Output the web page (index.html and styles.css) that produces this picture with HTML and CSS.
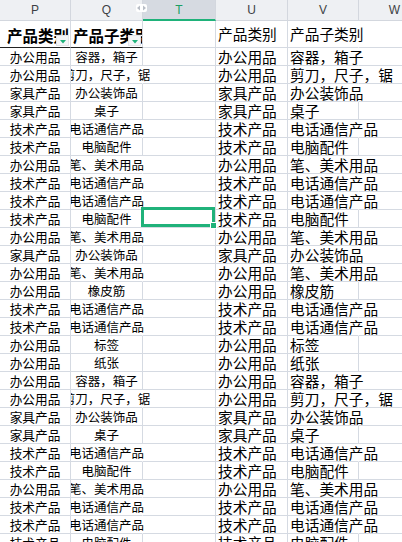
FILE: index.html
```html
<!DOCTYPE html>
<html lang="zh">
<head>
<meta charset="utf-8">
<title>Sheet</title>
<link rel="stylesheet" href="styles.css">
</head>
<body>
<div class="sheet">
  <div class="row colhead">
    <div class="ch">P</div>
    <div class="ch">Q</div>
    <div class="ch sel">T</div>
    <div class="ch">U</div>
    <div class="ch">V</div>
    <div class="ch">W</div>
  </div>
  <div class="row titles">
    <div class="cell p hd"><span class="hdtext">产品类别</span><span class="filter"><svg width="6" height="4" viewBox="0 0 6 4"><path d="M0 0H6L3 3.5Z" fill="#1fb27a"/></svg></span></div>
    <div class="cell q hd"><span class="hdtext">产品子类别</span><span class="filter"><svg width="6" height="4" viewBox="0 0 6 4"><path d="M0 0H6L3 3.5Z" fill="#1fb27a"/></svg></span></div>
    <div class="cell t"></div>
    <div class="cell u">产品类别</div>
    <div class="cell v ov">产品子类别</div>
    <div class="cell w"></div>
  </div>

  <div class="row"><div class="cell p">办公用品</div><div class="cell q">容器，箱子</div><div class="cell t"></div><div class="cell u">办公用品</div><div class="cell v ov">容器，箱子</div><div class="cell w"></div></div>
  <div class="row"><div class="cell p">办公用品</div><div class="cell q ov">剪刀，尺子，锯</div><div class="cell t"></div><div class="cell u">办公用品</div><div class="cell v ov">剪刀，尺子，锯</div><div class="cell w"></div></div>
  <div class="row"><div class="cell p">家具产品</div><div class="cell q">办公装饰品</div><div class="cell t"></div><div class="cell u">家具产品</div><div class="cell v ov">办公装饰品</div><div class="cell w"></div></div>
  <div class="row"><div class="cell p">家具产品</div><div class="cell q">桌子</div><div class="cell t"></div><div class="cell u">家具产品</div><div class="cell v">桌子</div><div class="cell w"></div></div>
  <div class="row"><div class="cell p">技术产品</div><div class="cell q ov">电话通信产品</div><div class="cell t"></div><div class="cell u">技术产品</div><div class="cell v ov">电话通信产品</div><div class="cell w"></div></div>
  <div class="row"><div class="cell p">技术产品</div><div class="cell q">电脑配件</div><div class="cell t"></div><div class="cell u">技术产品</div><div class="cell v">电脑配件</div><div class="cell w"></div></div>
  <div class="row"><div class="cell p">办公用品</div><div class="cell q ov">笔、美术用品</div><div class="cell t"></div><div class="cell u">办公用品</div><div class="cell v ov">笔、美术用品</div><div class="cell w"></div></div>
  <div class="row"><div class="cell p">技术产品</div><div class="cell q ov">电话通信产品</div><div class="cell t"></div><div class="cell u">技术产品</div><div class="cell v ov">电话通信产品</div><div class="cell w"></div></div>
  <div class="row"><div class="cell p">技术产品</div><div class="cell q ov">电话通信产品</div><div class="cell t"></div><div class="cell u">技术产品</div><div class="cell v ov">电话通信产品</div><div class="cell w"></div></div>
  <div class="row"><div class="cell p">技术产品</div><div class="cell q">电脑配件</div><div class="cell t active"></div><div class="cell u">技术产品</div><div class="cell v">电脑配件</div><div class="cell w"></div></div>
  <div class="row"><div class="cell p">办公用品</div><div class="cell q ov">笔、美术用品</div><div class="cell t"></div><div class="cell u">办公用品</div><div class="cell v ov">笔、美术用品</div><div class="cell w"></div></div>
  <div class="row"><div class="cell p">家具产品</div><div class="cell q">办公装饰品</div><div class="cell t"></div><div class="cell u">家具产品</div><div class="cell v ov">办公装饰品</div><div class="cell w"></div></div>
  <div class="row"><div class="cell p">办公用品</div><div class="cell q ov">笔、美术用品</div><div class="cell t"></div><div class="cell u">办公用品</div><div class="cell v ov">笔、美术用品</div><div class="cell w"></div></div>
  <div class="row"><div class="cell p">办公用品</div><div class="cell q">橡皮筋</div><div class="cell t"></div><div class="cell u">办公用品</div><div class="cell v">橡皮筋</div><div class="cell w"></div></div>
  <div class="row"><div class="cell p">技术产品</div><div class="cell q ov">电话通信产品</div><div class="cell t"></div><div class="cell u">技术产品</div><div class="cell v ov">电话通信产品</div><div class="cell w"></div></div>
  <div class="row"><div class="cell p">技术产品</div><div class="cell q ov">电话通信产品</div><div class="cell t"></div><div class="cell u">技术产品</div><div class="cell v ov">电话通信产品</div><div class="cell w"></div></div>
  <div class="row"><div class="cell p">办公用品</div><div class="cell q">标签</div><div class="cell t"></div><div class="cell u">办公用品</div><div class="cell v">标签</div><div class="cell w"></div></div>
  <div class="row"><div class="cell p">办公用品</div><div class="cell q">纸张</div><div class="cell t"></div><div class="cell u">办公用品</div><div class="cell v">纸张</div><div class="cell w"></div></div>
  <div class="row"><div class="cell p">办公用品</div><div class="cell q">容器，箱子</div><div class="cell t"></div><div class="cell u">办公用品</div><div class="cell v ov">容器，箱子</div><div class="cell w"></div></div>
  <div class="row"><div class="cell p">办公用品</div><div class="cell q ov">剪刀，尺子，锯</div><div class="cell t"></div><div class="cell u">办公用品</div><div class="cell v ov">剪刀，尺子，锯</div><div class="cell w"></div></div>
  <div class="row"><div class="cell p">家具产品</div><div class="cell q">办公装饰品</div><div class="cell t"></div><div class="cell u">家具产品</div><div class="cell v ov">办公装饰品</div><div class="cell w"></div></div>
  <div class="row"><div class="cell p">家具产品</div><div class="cell q">桌子</div><div class="cell t"></div><div class="cell u">家具产品</div><div class="cell v">桌子</div><div class="cell w"></div></div>
  <div class="row"><div class="cell p">技术产品</div><div class="cell q ov">电话通信产品</div><div class="cell t"></div><div class="cell u">技术产品</div><div class="cell v ov">电话通信产品</div><div class="cell w"></div></div>
  <div class="row"><div class="cell p">技术产品</div><div class="cell q">电脑配件</div><div class="cell t"></div><div class="cell u">技术产品</div><div class="cell v">电脑配件</div><div class="cell w"></div></div>
  <div class="row"><div class="cell p">办公用品</div><div class="cell q ov">笔、美术用品</div><div class="cell t"></div><div class="cell u">办公用品</div><div class="cell v ov">笔、美术用品</div><div class="cell w"></div></div>
  <div class="row"><div class="cell p">技术产品</div><div class="cell q ov">电话通信产品</div><div class="cell t"></div><div class="cell u">技术产品</div><div class="cell v ov">电话通信产品</div><div class="cell w"></div></div>
  <div class="row"><div class="cell p">技术产品</div><div class="cell q ov">电话通信产品</div><div class="cell t"></div><div class="cell u">技术产品</div><div class="cell v ov">电话通信产品</div><div class="cell w"></div></div>
  <div class="row"><div class="cell p">技术产品</div><div class="cell q">电脑配件</div><div class="cell t"></div><div class="cell u">技术产品</div><div class="cell v">电脑配件</div><div class="cell w"></div></div>

  <div class="hidden-cols" title="隐藏列"><svg width="11" height="8" viewBox="0 0 11 8"><path d="M4 1.5V6.5L1 4Z" fill="#b9bec6"/><path d="M7 1.5V6.5L10 4Z" fill="#b9bec6"/></svg></div>
  <div class="selection"><span class="handle"></span></div>
</div>
</body>
</html>
```
FILE: styles.css
```css
html, body {
  margin: 0;
  padding: 0;
  background: #ffffff;
}
body {
  width: 402px;
  height: 542px;
  overflow: hidden;
  font-family: "Noto Sans CJK SC", "Noto Sans", sans-serif;
  color: #000;
}
.sheet {
  position: relative;
  width: 431px;
}
.row {
  display: grid;
  grid-template-columns: 71px 72px 73px 72px 71px 72px;
  height: 18px;
}
.colhead {
  height: 21px;
  background: #eef0f3;
}
.ch {
  box-sizing: border-box;
  border-right: 1px solid #d3d7de;
  border-bottom: 1px solid #d3d7de;
  display: flex;
  align-items: center;
  justify-content: center;
  font-family: "Liberation Sans", Arial, sans-serif;
  font-size: 12px;
  color: #3c3f44;
  padding-bottom: 1px;
}
.ch.sel {
  background: #d6dae1;
  color: #1a9f63;
  border-bottom: 2px solid #1fb27a;
  padding-bottom: 0;
}
.titles {
  height: 27px;
}
.cell {
  box-sizing: border-box;
  min-width: 0;
  border-right: 1px solid #d5dae2;
  border-bottom: 1px solid #d5dae2;
  display: flex;
  align-items: center;
  white-space: nowrap;
  line-height: 16px;
}
.cell.p {
  justify-content: center;
  font-size: 12.7px;
  overflow: hidden;
}
.cell.q {
  justify-content: center;
  font-size: 12.5px;
  clip-path: inset(-1px -300px -1px 0);
}
.cell.u,
.cell.v {
  font-size: 14.7px;
  padding-left: 2px;
}
.cell.ov {
  border-right-color: transparent;
}
.cell.hd {
  position: relative;
  justify-content: flex-start;
  font-size: 15.5px;
  font-weight: bold;
  color: #000;
  border-bottom-color: #222;
  overflow: hidden;
  clip-path: none;
}
.cell.p.hd {
  padding-left: 7px;
}
.cell.q.hd {
  padding-left: 2px;
}
.hdtext {
  padding-top: 1px;
}
.filter {
  position: absolute;
  right: 1px;
  bottom: 1px;
  width: 13px;
  height: 11px;
  box-sizing: border-box;
  background: #f4f5f7;
  border: 1px solid #e2e4e8;
  display: flex;
  align-items: center;
  justify-content: center;
  padding-top: 2px;
}
.hidden-cols {
  position: absolute;
  left: 136px;
  top: 4px;
  width: 11px;
  height: 8px;
  background: #fff;
  border-radius: 2px;
  display: flex;
}
.selection {
  position: absolute;
  left: 141px;
  top: 207px;
  width: 74px;
  height: 20px;
  box-sizing: border-box;
  border: 3px solid #20b27a;
}
.handle {
  position: absolute;
  right: -5px;
  bottom: -5px;
  width: 5px;
  height: 5px;
  background: #20b27a;
  border: 1px solid #fff;
}
```
